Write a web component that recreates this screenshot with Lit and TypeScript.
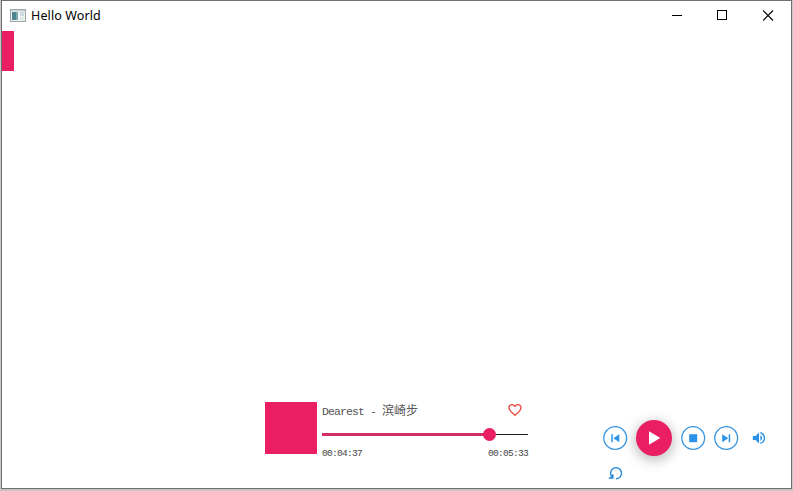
import { LitElement, html, css } from "lit";
import { customElement, property } from "lit/decorators.js";

@customElement("title-bar")
class TitleBar extends LitElement {
  static styles = css`
    :host { display: flex; height: 30px; align-items: center; padding-left: 8px; color: #000; }
    .app { width: 16px; height: 14px; margin-right: 5px; margin-bottom: 1px; }
    .name { flex: 1; font: 12.5px/20px "Noto Sans", sans-serif; letter-spacing: 0.12px; white-space: nowrap; }
    .win { width: 45.5px; height: 28px; margin-bottom: 2px; display: flex; align-items: center; justify-content: center; }
    svg { display: block; }
  `;
  render() {
    return html`
      <svg class="app" viewBox="0 0 16 14">
        <rect x=".5" y=".5" width="15" height="12" fill="#eef3f3" stroke="#9aa7a9" />
        <rect x="1" y="1" width="14" height="1.5" fill="#c9d5d6" />
        <rect x="2" y="3" width="6" height="8" fill="#4c8590" />
        <rect x="6" y="3" width="2" height="8" fill="#81a7ac" />
        <rect x="10" y="3" width="4" height="4" fill="#cbdde2" />
        <rect x="10" y="8" width="4" height="3" fill="#dce7e8" />
      </svg>
      <span class="name">Hello World</span>
      <div class="win"><svg width="11" height="11"><path d="M0 5.5H10" stroke="#000" /></svg></div>
      <div class="win"><svg width="11" height="11"><rect x=".5" y=".5" width="9" height="9" fill="none" stroke="#000" /></svg></div>
      <div class="win"><svg width="11" height="11"><path d="M0 .5l10 10M10 .5l-10 10" stroke="#000" stroke-width="1.1" /></svg></div>
    `;
  }
}

@customElement("track-panel")
class TrackPanel extends LitElement {
  @property({ type: Number }) position = 277;
  @property({ type: Number }) duration = 333;
  static styles = css`
    :host { display: flex; gap: 5px; width: 263px; height: 62px; color: #555; }
    .cover { width: 52px; height: 52px; background: #e91e63; }
    .body { flex: 1; display: flex; flex-direction: column; }
    .head { display: flex; justify-content: space-between; align-items: center; height: 17px; padding-right: 6px; }
    .song { font: 11.5px/15px "Liberation Mono", "Noto Sans CJK SC", monospace; letter-spacing: -0.9px; white-space: pre; }
    .cjk { font: 12px/15px "Noto Sans CJK SC", sans-serif; letter-spacing: 0; }
    .slider { display: flex; align-items: center; height: 14px; margin-top: 8px; }
    .done { height: 3px; background: #d42e66; }
    .knob { width: 13px; height: 13px; border-radius: 50%; background: #e91e63; margin-left: -6px; }
    .rest { flex: 1; height: 1px; background: #222; }
    .times { display: flex; justify-content: space-between; margin-top: 7px; font: 9.5px/12px "Liberation Mono", monospace; letter-spacing: -0.7px; color: #444; }
    svg { display: block; margin-bottom: 2px; }
  `;
  private clock(s: number) {
    return [s / 3600, (s / 60) % 60, s % 60].map((n) => String(Math.floor(n)).padStart(2, "0")).join(":");
  }
  render() {
    return html`
      <div class="cover"></div>
      <div class="body">
        <div class="head">
          <span class="song">Dearest - <span class="cjk">滨崎步</span></span>
          <svg width="14" height="14" viewBox="1.5 1.5 21 21"><path fill="#e8483c" d="M16.5 3c-1.74 0-3.41.81-4.5 2.09C10.91 3.81 9.24 3 7.5 3 4.42 3 2 5.42 2 8.5c0 3.78 3.4 6.86 8.55 11.54L12 21.35l1.45-1.32C18.6 15.36 22 12.28 22 8.5 22 5.42 19.58 3 16.5 3zm-4.4 15.55l-.1.1-.1-.1C7.14 14.24 4 11.39 4 8.5 4 6.5 5.5 5 7.5 5c1.54 0 3.04.99 3.57 2.36h1.87C13.46 5.99 14.96 5 16.5 5c2 0 3.5 1.5 3.5 3.5 0 2.89-3.14 5.74-7.9 10.05z" /></svg>
        </div>
        <div class="slider">
          <div class="done" style="width:${(this.position / this.duration) * 201}px"></div>
          <div class="knob"></div>
          <div class="rest"></div>
        </div>
        <div class="times"><span>${this.clock(this.position)}</span><span>${this.clock(this.duration)}</span></div>
      </div>
    `;
  }
}

@customElement("player-controls")
class PlayerControls extends LitElement {
  static styles = css`
    :host { display: block; width: 170px; }
    .row { display: flex; align-items: center; height: 36px; color: #2a93e8; }
    .play { width: 36px; height: 36px; margin: 0 9px 0 8px; border-radius: 50%; background: #e91e63; display: flex; align-items: center; justify-content: center; box-shadow: 0 3px 12px 2px rgba(0, 0, 0, 0.24); }
    .next { margin-left: 8px; }
    .volume { margin-left: 13px; }
    .mode { margin: 10px 0 0 5px; }
    svg { display: block; }
  `;
  private ring(d: string, cls = "") {
    return html`<svg class=${cls} width="25" height="25"><circle cx="12.2" cy="12" r="11.4" fill="none" stroke="#3a96e0" stroke-width="1.3" /><path fill="currentColor" d=${d} /></svg>`;
  }
  render() {
    return html`
      <div class="row">
        ${this.ring("M8.3 8.2h1.5v8H8.3zM16.3 8.2v8L10.4 12.2z")}
        <div class="play"><svg width="14" height="16"><path fill="#fff" d="M2 1.2v13.6l11.3-6.8z" /></svg></div>
        ${this.ring("M8.2 8.2h8v8h-8z")}
        ${this.ring("M14.7 8.2h1.5v8h-1.5zM8.2 8.2v8L14.2 12.2z", "next")}
        <svg class="volume" width="14" height="14" viewBox="1.8 1.8 20.4 20.4"><path fill="currentColor" d="M3 9v6h4l5 5V4L7 9H3zm13.5 3c0-1.77-1.02-3.29-2.5-4.03v8.05c1.48-.73 2.5-2.25 2.5-4.02zM14 3.23v2.06c2.89.86 5 3.54 5 6.71s-2.11 5.85-5 6.71v2.06c4.01-.91 7-4.49 7-8.77s-2.99-7.86-7-8.77z" /></svg>
      </div>
      <svg class="mode" width="16" height="14"><path fill="none" stroke="#2488d8" stroke-width="1.4" d="M8 12.7A5.5 5.5 0 1 0 4.4 11.3M.8 12H4.8V8.2" /></svg>
    `;
  }
}

@customElement("app-root")
class AppRoot extends LitElement {
  static styles = css`
    :host { display: block; width: 793px; height: 491px; box-sizing: border-box; padding: 0 1px 2px; background: #c6c6c6; overflow: hidden; }
    .window { box-sizing: border-box; height: 489px; border: 1px solid #707070; background: #fff; display: flex; flex-direction: column; }
    .tab { width: 12px; height: 40px; background: #e91e63; }
    .space { flex: 1; }
    .player { display: flex; height: 86px; padding-left: 263px; }
    player-controls { margin: 18px 0 0 75px; }
  `;
  render() {
    return html`
      <div class="window">
        <title-bar></title-bar>
        <div class="tab"></div>
        <div class="space"></div>
        <div class="player">
          <track-panel></track-panel>
          <player-controls></player-controls>
        </div>
      </div>
    `;
  }
}
